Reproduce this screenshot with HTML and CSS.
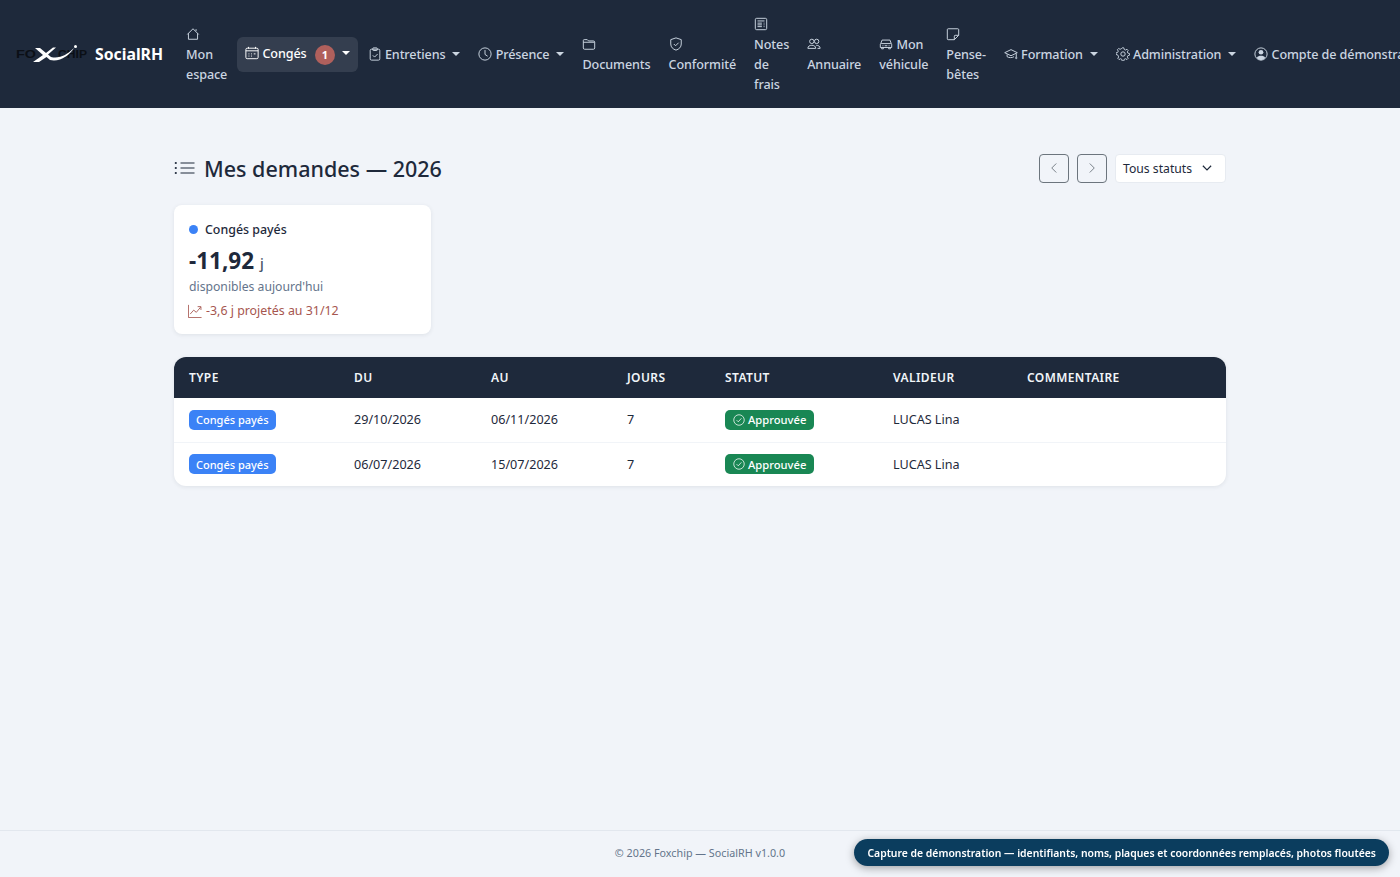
FILE: index.html
```html
<!DOCTYPE html>
<html lang="fr">
<head>
<meta charset="utf-8">
<title>SocialRH</title>
<link rel="stylesheet" href="styles.css">
</head>
<body>
<nav class="navbar">
  <a class="brand">
    <svg class="logo" viewBox="0 0 72 20" width="72" height="20">
      <text class="logo-dark" x="0" y="14" textLength="20" lengthAdjust="spacingAndGlyphs">FO</text>
      <text class="logo-dark" x="42" y="14" textLength="29" lengthAdjust="spacingAndGlyphs">CHIP</text>
      <path class="logo-x" d="M19 4h5l6 5 7-5.500h3L32 10.500l3 2.500c8 2 16-2 23-9-5 8-14 14-24 12l-3.500-3L23 18h-6l10-7z"/>
      <circle class="logo-x" cx="59.500" cy="2.500" r="1.500"/>
    </svg>
    <span>SocialRH</span>
  </a>
  <div class="nav-items">
    <a class="item w-espace"><svg class="ico" viewBox="0 0 16 16"><path d="M8 2 1.500 8.500M2.800 7.200V14h10.400V7.200M8 2l6.500 6.500M11.500 2.500v2"/></svg><br>Mon<br>espace</a>
    <a class="item active w-conges"><svg class="ico" viewBox="0 0 16 16"><rect x="1" y="2.500" width="14" height="12" rx="1.500"/><path d="M1 5.500h14M4 1v2M12 1v2M4 9h1M7 9h1M10 9h2M4 11.500h1M7 11.500h1"/></svg> Congés <b class="count">1</b><i class="caret light"></i></a>
    <a class="item w-entretiens"><svg class="ico" viewBox="0 0 16 16"><rect x="2.500" y="2.500" width="11" height="12.500" rx="1.500"/><rect x="5.500" y="1" width="5" height="3" rx=".6"/><path d="m5.500 9.500 2 2 3.500-3.500"/></svg> Entretiens<i class="caret"></i></a>
    <a class="item w-presence"><svg class="ico" viewBox="0 0 16 16"><circle cx="8" cy="8" r="7"/><path d="M8 3.500V8.500l3 2"/></svg> Présence<i class="caret"></i></a>
    <a class="item w-documents"><svg class="ico" viewBox="0 0 16 16"><path d="M1.500 4V12.500a1.500 1.500 0 0 0 1.500 1.500H13a1.500 1.500 0 0 0 1.500-1.500V6A1.500 1.500 0 0 0 13 4.500H7.500L6 3H2.500a1 1 0 0 0-1 1ZM1.500 6h13"/></svg><br>Documents</a>
    <a class="item w-conformite"><svg class="ico" viewBox="0 0 16 16"><path d="M8 1 2 3v5c0 3.500 2.500 6 6 7 3.500-1 6-3.500 6-7V3Z"/><path d="m5.500 8 2 2 3.500-3.500"/></svg><br>Conformité</a>
    <a class="item w-notes"><svg class="ico" viewBox="0 0 16 16"><rect x="1.500" y="1.500" width="13" height="13" rx="1.500"/><path d="M4 4.500h8M4 7h5M4 9h5M4 11h5M11 7h1M11 9h1M11 11h1"/></svg><br>Notes<br>de<br>frais</a>
    <a class="item w-annuaire"><svg class="ico" viewBox="0 0 16 16"><circle cx="5.500" cy="5" r="2.500"/><circle cx="11" cy="5" r="2.500"/><path d="M1 13c0-2.500 2-3.500 4.500-3.500S10 10.500 10 13ZM10.500 9.500c2.500 0 4.500 1 4.500 3.500h-3"/></svg><br>Annuaire</a>
    <a class="item w-vehicule"><svg class="ico" viewBox="0 0 16 16"><path d="M2 7.500 3.500 3.500h9L14 7.500M1.500 8.500a1 1 0 0 1 1-1h11a1 1 0 0 1 1 1V12h-13ZM3 12v1.500h2V12M11 12v1.500h2V12M4 10h1M11 10h1M6.500 10h3"/></svg> Mon<br>véhicule</a>
    <a class="item w-pense"><svg class="ico" viewBox="0 0 16 16"><path d="M2.500 2h11a1 1 0 0 1 1 1v6.500L9.500 14.500H2.500a1 1 0 0 1-1-1V3a1 1 0 0 1 1-1ZM9.500 14.500V10.500a1 1 0 0 1 1-1h4"/></svg><br>Pense-<br>bêtes</a>
    <a class="item w-formation"><svg class="ico" viewBox="0 0 16 16"><path d="M8 3 .8 6.500 8 10l7.200-3.500ZM3.500 8.500V11c1.500 1.500 6.500 1.500 8 0M14 7.500v4"/><circle cx="14" cy="12.500" r=".8"/></svg> Formation<i class="caret"></i></a>
    <a class="item w-admin"><svg class="ico" viewBox="0 0 16 16"><circle cx="8" cy="8" r="2.500"/><path d="M7 1h2l.5 2 1.500.700 1.800-1 1.400 1.400-1 1.800.700 1.500 2 .500v2l-2 .500-.700 1.500 1 1.800-1.400 1.400-1.800-1-1.500.700-.5 2H7l-.5-2-1.500-.700-1.800 1-1.400-1.400 1-1.800L1.600 9.500-.4 9V7l2-.5.700-1.500-1-1.800 1.400-1.400 1.800 1 1.500-.700Z" transform="translate(.4 0) scale(.95)"/></svg> Administration<i class="caret"></i></a>
    <a class="item w-compte"><svg class="ico" viewBox="0 0 16 16"><circle cx="8" cy="8" r="7"/><circle class="fill" cx="8" cy="6" r="2.700"/><path class="fill" d="M3.200 12.500C4 10.500 6 10 8 10s4 .5 4.800 2.500A6.500 6.500 0 0 1 8 15a6.500 6.500 0 0 1-4.800-2.500Z"/></svg> Compte de démonstration<i class="caret"></i></a>
  </div>
</nav>

<main class="content">
  <header class="page-head">
    <h1><svg class="list-ico" viewBox="0 0 21 16"><path d="M6.500 3H20.500M6.500 8H20.500M6.500 13H20.500"/><circle cx="1.800" cy="3" r="1.100"/><circle cx="1.800" cy="8" r="1.100"/><circle cx="1.800" cy="13" r="1.100"/></svg>Mes demandes — 2026</h1>
    <div class="tools">
      <button class="arrow"><svg viewBox="0 0 16 16"><path d="M11 2 5 8l6 6"/></svg></button>
      <button class="arrow"><svg viewBox="0 0 16 16"><path d="m5 2 6 6-6 6"/></svg></button>
      <div class="select">Tous statuts<svg viewBox="0 0 16 16"><path d="m2.500 5 5.500 5.500L13.500 5"/></svg></div>
    </div>
  </header>

  <section class="card">
    <div class="card-label"><span class="dot"></span>Congés payés</div>
    <div class="card-value">-11,92 <small>j</small></div>
    <div class="card-sub">disponibles aujourd'hui</div>
    <div class="card-proj"><svg viewBox="0 0 16 16"><path d="M.5 1v14.500H15.500M2.500 11.500 6.500 7l3 2.500L14.500 3.500M11 3h3.800v3.800"/></svg>-3,6 j projetés au 31/12</div>
  </section>

  <section class="table-wrap">
    <table>
      <thead>
        <tr><th class="c1">Type</th><th class="c2">Du</th><th class="c3">Au</th><th class="c4">Jours</th><th class="c5">Statut</th><th class="c6">Valideur</th><th>Commentaire</th></tr>
      </thead>
      <tbody>
        <tr><td><span class="tag">Congés payés</span></td><td>29/10/2026</td><td>06/11/2026</td><td>7</td><td><span class="status"><svg viewBox="0 0 16 16"><circle cx="8" cy="8" r="7"/><path d="m4.800 8.200 2.200 2.200 4.200-4.600"/></svg>Approuvée</span></td><td>LUCAS Lina</td><td></td></tr>
        <tr><td><span class="tag">Congés payés</span></td><td>06/07/2026</td><td>15/07/2026</td><td>7</td><td><span class="status"><svg viewBox="0 0 16 16"><circle cx="8" cy="8" r="7"/><path d="m4.800 8.200 2.200 2.200 4.200-4.600"/></svg>Approuvée</span></td><td>LUCAS Lina</td><td></td></tr>
      </tbody>
    </table>
  </section>
</main>

<footer class="footer">© 2026 Foxchip — SocialRH v1.0.0</footer>
<div class="demo">Capture de démonstration — identifiants, noms, plaques et coordonnées remplacés, photos floutées</div>
</body>
</html>
```

FILE: styles.css
```css
* { box-sizing: border-box; }
html, body { height: 100%; }
body {
  margin: 0;
  height: 877px;
  overflow: hidden;
  display: flex;
  flex-direction: column;
  background: #f1f4f9;
  color: #1e293b;
  font-family: "Noto Sans", "Open Sans", sans-serif;
  font-size: 14px;
}
.navbar {
  height: 108px;
  flex: none;
  display: flex;
  align-items: center;
  padding-left: 16px;
  background: #1e293b;
  overflow: hidden;
  white-space: nowrap;
}
.brand {
  display: flex;
  align-items: center;
  gap: 7px;
  margin-right: 15px;
  color: #fff;
  font-weight: 700;
  font-size: 15.800px;
}
.logo { display: block; }
.logo-dark { font: 700 10px "Liberation Sans", sans-serif; fill: #0b0f16; }
.logo-x { fill: #fff; }
.nav-items { display: flex; align-items: center; flex: none; padding-top: 2px; }
.item {
  display: block;
  flex: none;
  padding: 8px;
  line-height: 20px;
  color: #cbd5e1;
  font-size: 12.600px;
  font-weight: 500;
  letter-spacing: -.1px;
}
.ico {
  width: 14px;
  height: 14px;
  vertical-align: -2px;
  fill: none;
  stroke: currentColor;
  stroke-width: 1.100;
}
.ico .fill { fill: currentColor; stroke: none; }
.active {
  height: 35px;
  margin-top: -2px;
  padding: 7px 8px;
  border-radius: 6px;
  background: rgba(255, 255, 255, .1);
  color: #fff;
}
.count {
  display: inline-block;
  width: 20px;
  height: 20px;
  margin-left: 5px;
  border-radius: 50%;
  background: #b0605c;
  color: #fff;
  font-size: 11px;
  font-weight: 700;
  line-height: 20px;
  text-align: center;
  vertical-align: -1px;
}
.caret {
  display: inline-block;
  margin-left: 7px;
  vertical-align: 3px;
  border-top: 4px solid #cbd5e1;
  border-left: 4px solid transparent;
  border-right: 4px solid transparent;
}
.caret.light { border-top-color: #fff; }
.w-espace, .w-conges, .w-entretiens, .w-presence, .w-documents, .w-conformite,
.w-notes, .w-annuaire, .w-vehicule, .w-pense, .w-formation, .w-admin { margin-right: 2px; }

.content {
  flex: 1;
  padding: 42px 174px 0;
}
.page-head {
  display: flex;
  align-items: center;
  justify-content: space-between;
  height: 36px;
  margin-bottom: 19px;
}
h1 {
  margin: 0;
  display: flex;
  align-items: center;
  gap: 9px;
  font-size: 21.500px;
  font-weight: 500;
  color: #1e293b;
}
.list-ico {
  width: 21px;
  height: 16px;
  fill: #1e293b;
  stroke: none;
}
.list-ico path { stroke: #1e293b; stroke-width: 1.200; fill: none; }
.tools { display: flex; align-items: center; gap: 8px; }
.arrow {
  width: 30px;
  height: 29px;
  padding: 0;
  display: flex;
  align-items: center;
  justify-content: center;
  background: transparent;
  border: 1px solid #6c757d;
  border-radius: 4px;
}
.arrow svg { width: 12px; height: 12px; fill: none; stroke: #6c757d; stroke-width: 1.200; }
.select {
  width: 111px;
  height: 29px;
  padding: 0 8px 0 7px;
  display: flex;
  align-items: center;
  justify-content: space-between;
  background: #fff;
  border: 1px solid #e7ebf1;
  border-radius: 4px;
  font-size: 12.200px;
  color: #1e293b;
}
.select svg { width: 12px; height: 12px; margin-right: 4px; fill: none; stroke: #1e293b; stroke-width: 1.600; }
.card {
  width: 257px;
  height: 129px;
  padding: 14px 15px;
  margin-bottom: 23px;
  background: #fff;
  border-radius: 8px;
  box-shadow: 0 1px 4px rgba(30, 41, 59, .09);
}
.card-label {
  display: flex;
  align-items: center;
  gap: 7px;
  height: 20px;
  font-size: 12.400px;
  font-weight: 500;
}
.dot { width: 9px; height: 9px; border-radius: 50%; background: #3b82f6; }
.card-value {
  margin-top: 6px;
  height: 32px;
  line-height: 32px;
  font-size: 22.500px;
  font-weight: 700;
}
.card-value small { font-size: 14px; font-weight: 500; color: #475569; }
.card-sub { margin-top: 0; line-height: 20px; font-size: 12.200px; color: #64748b; }
.card-proj {
  display: flex;
  align-items: center;
  gap: 4px;
  margin-top: 4px;
  line-height: 20px;
  margin-left: -1px;
  font-size: 12.400px;
  color: #a6564f;
}
.card-proj svg { width: 14px; height: 14px; fill: none; stroke: currentColor; stroke-width: 1; }
.table-wrap {
  background: #fff;
  border-radius: 12px;
  overflow: hidden;
  box-shadow: 0 1px 4px rgba(30, 41, 59, .09);
}
table {
  width: 100%;
  border-collapse: collapse;
  table-layout: fixed;
}
th {
  height: 41px;
  padding: 0 15px;
  background: #1e293b;
  color: #f1f5f9;
  font-size: 12px;
  font-weight: 600;
  letter-spacing: .4px;
  text-align: left;
  text-transform: uppercase;
}
td {
  height: 44px;
  padding: 0 15px;
  border-bottom: 1px solid #f1f4f8;
  font-size: 12.600px;
  color: #1e293b;
}
tbody tr:last-child td { border-bottom: 0; }
.c1 { width: 165px; }
.c2 { width: 137px; }
.c3 { width: 136px; }
.c4 { width: 98px; }
.c5 { width: 168px; }
.c6 { width: 134px; }
.tag, .status {
  display: inline-flex;
  align-items: center;
  height: 20px;
  border-radius: 5px;
  color: #fff;
  font-size: 11px;
  font-weight: 500;
}
.tag { background: #3b82f6; padding: 0 7px; }
.status { background: #198754; gap: 3px; padding: 0 8px; font-size: 11.200px; }
.status svg { width: 12px; height: 12px; fill: none; stroke: #fff; stroke-width: 1; }
.footer {
  flex: none;
  height: 47px;
  padding-top: 15px;
  border-top: 1px solid #e2e7ee;
  text-align: center;
  font-size: 10.750px;
  line-height: 15px;
  color: #64748b;
}
.demo {
  position: fixed;
  right: 11px;
  bottom: 11px;
  height: 27px;
  padding: 0 13px;
  display: flex;
  align-items: center;
  border-radius: 14px;
  background: #0b3d5e;
  color: #fff;
  font-size: 10.400px;
  font-weight: 600;
  white-space: nowrap;
  box-shadow: 0 2px 8px rgba(0, 0, 0, .35);
}
```
